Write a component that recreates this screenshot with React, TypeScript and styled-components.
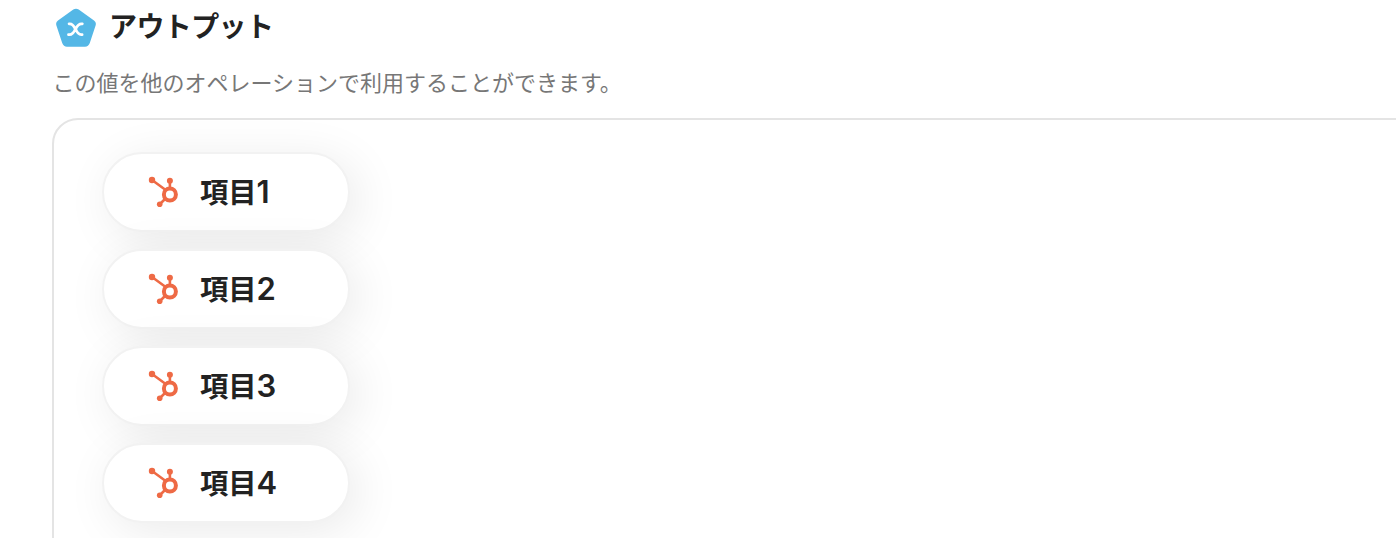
import React from "react";
import styled, { createGlobalStyle } from "styled-components";

const GlobalStyle = createGlobalStyle`
  html, body { margin: 0; height: 100%; overflow: hidden; background: #fff; }
  body { font-family: "Noto Sans CJK JP", sans-serif; color: #222; }
`;

const Page = styled.main`
  box-sizing: border-box;
  height: 538px;
  padding: 7px 0 0 52px;
  overflow: hidden;
`;

const Header = styled.header`
  display: flex;
  align-items: flex-start;
  height: 60px;
  padding-left: 4px;
`;

const Title = styled.h1`
  margin: 0 0 0 13px;
  font-size: 28px;
  line-height: 37px;
  font-weight: 700;
  letter-spacing: -0.6px;
  white-space: nowrap;
`;

const Description = styled.p`
  margin: 0;
  height: 51px;
  padding-left: 0.5px;
  font-size: 22px;
  line-height: 28px;
  color: #777;
  white-space: nowrap;
`;

const Panel = styled.section`
  box-sizing: border-box;
  width: 1400px;
  height: 600px;
  padding: 32px 48px;
  border: 2px solid #e4e4e4;
  border-radius: 26px;
`;

const List = styled.ul`
  display: flex;
  flex-direction: column;
  align-items: flex-start;
  gap: 16.85px;
  margin: 0;
  padding: 0;
  list-style: none;
`;

const Pill = styled.li`
  box-sizing: border-box;
  display: flex;
  align-items: center;
  gap: 21px;
  width: 248px;
  height: 80px;
  padding-left: 44px;
  border: 2px solid #f2f2f2;
  border-radius: 40px;
  background: #fff;
  box-shadow: 8px 8px 48px rgba(0, 0, 0, 0.085);
`;

const Label = styled.span`
  display: flex;
  align-items: baseline;
  font-size: 28.3px;
  line-height: 40px;
  padding-bottom: 0.8px;
  font-weight: 700;
`;

const Digit = styled.span`
  font-family: Inter, sans-serif;
  font-size: 31px;
  font-weight: 600;
`;

const OutputIcon = () => (
  <svg width="40" height="40" viewBox="0 0 40 40" aria-hidden="true">
    <path
      d="M17.3 2.6Q20 .8 22.7 2.6L38 13.5Q40.6 15.4 39.6 18.4L33.8 36Q32.5 39.7 29 39.7H11Q7.5 39.7 6.2 36L.4 18.4Q-.6 15.400 2 13.5Z"
      fill="#54b7e6"
    />
    <path
      d="M13 16.900C16.800 16.300 18.300 19.800 19.300 22C18.400 24.500 16.400 28.200 12.400 27.600M26.400 16.900C22.800 16.300 20.700 19.800 19.700 22C20.600 24.500 22.400 28.200 26.200 27.600"
      fill="none"
      stroke="#fff"
      strokeWidth="2.600"
      strokeLinecap="round"
      strokeLinejoin="round"
    />
  </svg>
);

const SprocketIcon = () => (
  <svg width="31" height="32" viewBox="0 0 31 32" aria-hidden="true">
    <g fill="none" stroke="#ee6a45">
      <path d="M4 4L17 13.5M21.9 5V13M17.5 22.5L12 28" strokeWidth="2.6" />
      <circle cx="21.9" cy="18.5" r="6" strokeWidth="4" />
    </g>
    <g fill="#ee6a45">
      <circle cx="4" cy="4" r="3.2" />
      <circle cx="21.9" cy="4.8" r="3" />
      <circle cx="11.7" cy="28.3" r="2.8" />
    </g>
  </svg>
);

const items = ["1", "2", "3", "4"];

export default function App() {
  return (
    <Page>
      <GlobalStyle />
      <Header>
        <OutputIcon />
        <Title>アウトプット</Title>
      </Header>
      <Description>この値を他のオペレーションで利用することができます。</Description>
      <Panel>
        <List>
          {items.map((n) => (
            <Pill key={n}>
              <SprocketIcon />
              <Label>
                項目<Digit>{n}</Digit>
              </Label>
            </Pill>
          ))}
        </List>
      </Panel>
    </Page>
  );
}
